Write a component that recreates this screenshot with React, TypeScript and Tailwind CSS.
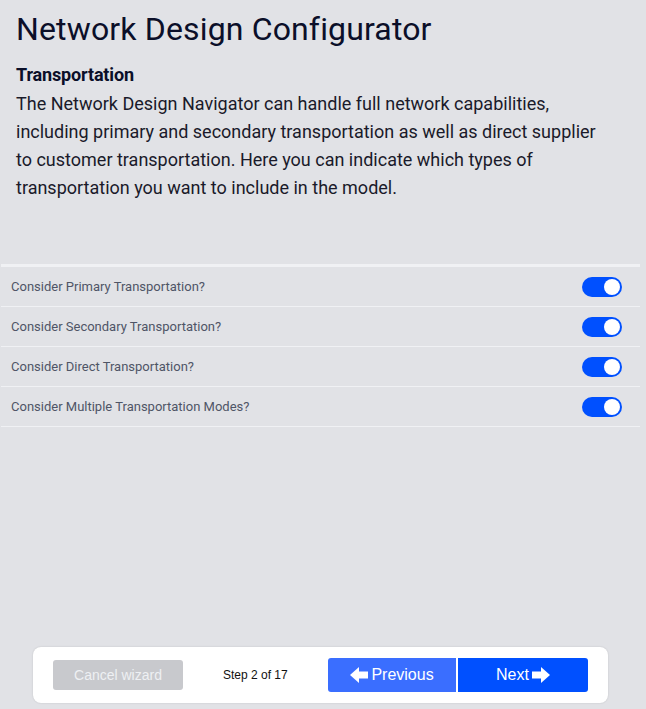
import { useState } from "react"

const options = [
  "Consider Primary Transportation?",
  "Consider Secondary Transportation?",
  "Consider Direct Transportation?",
  "Consider Multiple Transportation Modes?",
]

function Toggle({ on, onClick }: { on: boolean; onClick: () => void }) {
  return (
    <button
      onClick={onClick}
      className={`relative h-[20px] w-[40px] rounded-full ${on ? "bg-[#0050ff]" : "bg-gray-400"}`}
    >
      <span
        className={`absolute top-[2px] h-[16px] w-[16px] rounded-full bg-white ${on ? "left-[22px]" : "left-[2px]"}`}
      />
    </button>
  )
}

function Arrow({ dir }: { dir: "left" | "right" }) {
  return (
    <svg width="18" height="16" viewBox="0 0 18 16" className={dir === "right" ? "" : "rotate-180"}>
      <path d="M0 4.5h9V0l9 8-9 8v-4.5H0z" fill="currentColor" />
    </svg>
  )
}

export default function App() {
  const [vals, setVals] = useState([true, true, true, true])

  return (
    <div className="flex h-[709px] flex-col bg-[#e1e2e6] font-['Roboto',sans-serif]">
      <div className="pl-4 pr-[31px] pt-[9px]">
        <h1 className="text-[32px] leading-[40px] tracking-[0.15px] text-[#0b0f29]">Network Design Configurator</h1>
        <h2 className="mt-[14px] text-[18px] font-bold leading-[24px] tracking-[-0.15px] text-[#0b0f29]">
          Transportation
        </h2>
        <p className="mt-[3px] text-[18px] leading-[28px] text-[#1a1a2a]">
          The Network Design Navigator can handle full network capabilities, including primary and secondary
          transportation as well as direct supplier to customer transportation. Here you can indicate which types of
          transportation you want to include in the model.
        </p>
      </div>

      <div className="mt-[62px] ml-[1px] mr-[6px] border-t-[3px] border-[#f0f1f4]">
        {options.map((label, i) => (
          <div
            key={label}
            className="flex h-[40px] items-center justify-between border-b border-[#f0f1f4] pl-[10px] pr-[18px]"
          >
            <span className="text-[13px] text-[#4f5566]">{label}</span>
            <Toggle on={vals[i]} onClick={() => setVals((v) => v.map((x, j) => (j === i ? !x : x)))} />
          </div>
        ))}
      </div>

      <div className="flex-1" />

      <div className="mb-[6px] ml-[33px] mr-[38px] flex h-[56px] items-center rounded-lg bg-white pl-[20px] pr-[20px] font-['Liberation_Sans',sans-serif] shadow-[0_0_2px_rgba(0,0,0,0.15)]">
        <button className="h-[30px] w-[130px] rounded-[3px] bg-[#c8c9cd] text-[14px] text-[#eef0f3]">
          Cancel wizard
        </button>
        <span className="ml-[40px] text-[12px] text-[#111]">Step 2 of 17</span>
        <div className="ml-auto flex gap-[2px]">
          <button className="flex h-[34px] w-[128px] items-center justify-center gap-[3px] rounded-l-[3px] bg-[#3a6eff] text-[16px] text-white">
            <Arrow dir="left" />
            Previous
          </button>
          <button className="flex h-[34px] w-[130px] items-center justify-center gap-[3px] rounded-r-[3px] bg-[#0050ff] text-[16px] text-white">
            Next
            <Arrow dir="right" />
          </button>
        </div>
      </div>
    </div>
  )
}
